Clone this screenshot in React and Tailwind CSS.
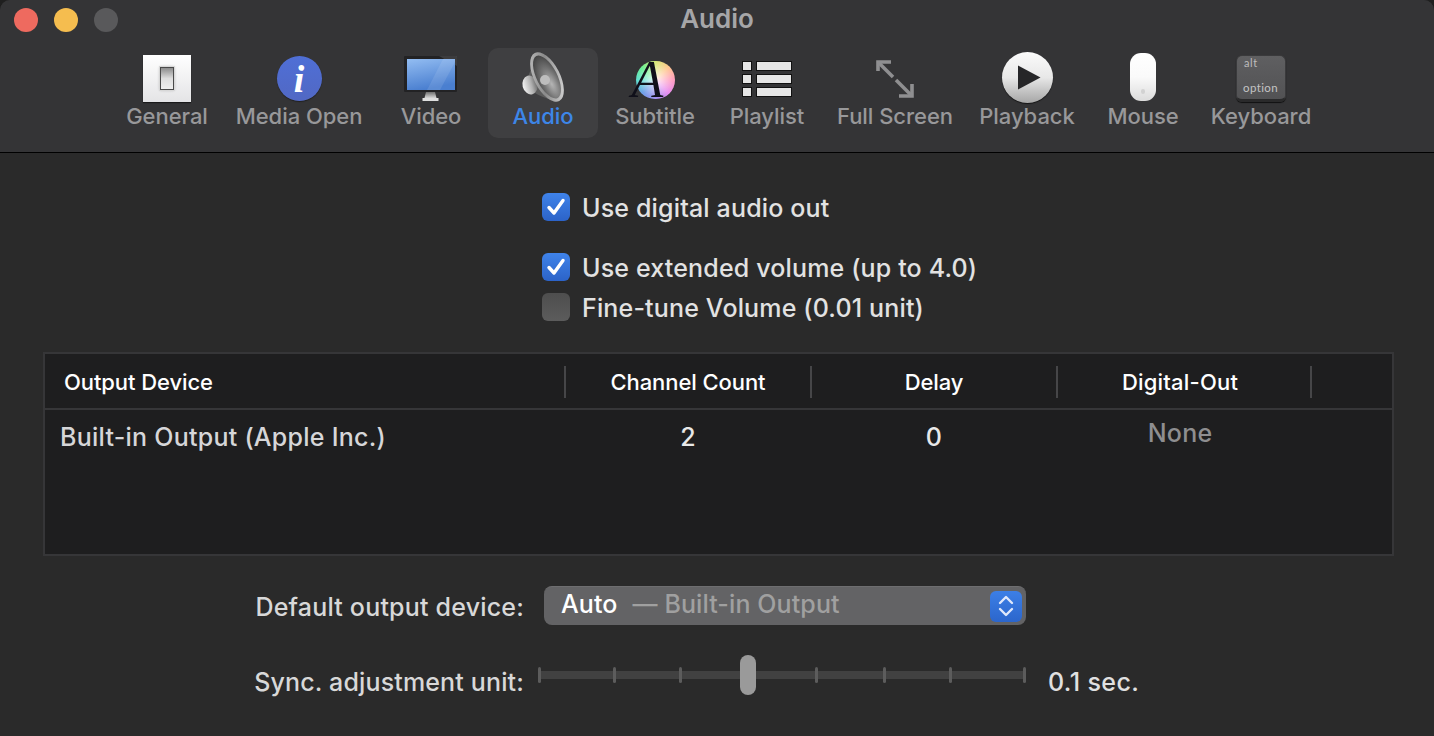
import React from "react";

const font = { fontFamily: "Inter, 'Liberation Sans', sans-serif" };

function SwitchIcon() {
  return (
    <div className="w-[48px] h-[47px] bg-gradient-to-b from-[#ffffff] to-[#e4e4e6] flex items-center justify-center shadow-[0_1px_1px_rgba(0,0,0,0.5)]">
      <div className="w-[14px] h-[23px] outline outline-1 outline-[#d8d8d8] border border-[#4a4a4a] bg-gradient-to-b from-[#8d8d8d] via-[#dedede] to-[#efefef] shadow-[0_0_3px_rgba(0,0,0,0.3)]" />
    </div>
  );
}

function InfoIcon() {
  return (
    <div className="w-[45px] h-[45px] mb-[1px] rounded-full bg-gradient-to-b from-[#4f6fd6] to-[#5168c4] flex items-center justify-center shadow-[0_1px_1px_rgba(0,0,0,0.4)]">
      <span className="text-white text-[38px] leading-none italic font-bold" style={{ fontFamily: "'Liberation Serif', serif" }}>i</span>
    </div>
  );
}

function MonitorIcon() {
  return (
    <svg width="56" height="46" viewBox="0 0 56 46">
      <defs>
        <linearGradient id="scr" x1="0" y1="0" x2="0.3" y2="1">
          <stop offset="0" stopColor="#93bdf2" />
          <stop offset="1" stopColor="#4a7fd0" />
        </linearGradient>
        <linearGradient id="std" x1="0" y1="0" x2="0" y2="1">
          <stop offset="0" stopColor="#6f6f6f" />
          <stop offset="1" stopColor="#d8d8d8" />
        </linearGradient>
      </defs>
      <rect x="1" y="0" width="53" height="36" rx="1" fill="#222224" />
      <path d="M36 0 H54 V10 Z" fill="#ffffff" opacity="0.12" />
      <rect x="4" y="3" width="48" height="31" fill="url(#scr)" />
      <path d="M24 34 L40 3 L52 3 L52 6 L37 34 Z" fill="#ffffff" opacity="0.1" />
      <path d="M23 36 H32 L33.5 42 H21.5 Z" fill="url(#std)" />
      <rect x="19.5" y="42" width="16" height="3" fill="#dedede" />
    </svg>
  );
}

function SpeakerIcon() {
  return (
    <svg width="48" height="58" viewBox="0 0 48 58" className="-mb-[2px]">
      <defs>
        <linearGradient id="rim" x1="0" y1="0" x2="1" y2="1">
          <stop offset="0" stopColor="#c9c9c9" />
          <stop offset="0.45" stopColor="#8a8a8a" />
          <stop offset="1" stopColor="#e6e6e6" />
        </linearGradient>
        <radialGradient id="cone" cx="0.55" cy="0.68" r="0.7">
          <stop offset="0" stopColor="#b5b5b5" />
          <stop offset="0.5" stopColor="#767676" />
          <stop offset="1" stopColor="#404040" />
        </radialGradient>
        <linearGradient id="mag" x1="0" y1="0" x2="1" y2="0">
          <stop offset="0" stopColor="#f4f4f4" />
          <stop offset="0.6" stopColor="#b0b0b0" />
          <stop offset="1" stopColor="#666" />
        </linearGradient>
      </defs>
      <path d="M15 12 C13 24 8 30 8 36 C9 44 18 50 36 55 Z" fill="#5c5c5c" />
      <ellipse cx="11" cy="39" rx="7.5" ry="9.5" transform="rotate(-15 11 39)" fill="url(#mag)" />
      <ellipse cx="28" cy="31" rx="13" ry="27" transform="rotate(-27 28 31)" fill="url(#rim)" />
      <ellipse cx="28" cy="31" rx="10.2" ry="23.5" transform="rotate(-27 28 31)" fill="url(#cone)" />
      <circle cx="26" cy="34" r="5" fill="#bdbdbd" />
    </svg>
  );
}

function SubtitleIcon() {
  return (
    <div className="relative w-[39px] h-[38px] mb-[3px] rounded-full bg-[conic-gradient(from_0deg,#d8e878,#ffc890,#ff9ec0,#e88ff0,#a090f0,#70a0e8,#60e0d0,#70f090,#d8e878)]">
      <div className="absolute inset-0 rounded-full bg-[radial-gradient(circle,rgba(255,255,255,0.85)_0%,rgba(255,255,255,0)_65%)]" />
      <span className="absolute left-[-4px] top-[-7px] text-[52px] leading-[52px] italic text-[#10101a]" style={{ fontFamily: "'Liberation Serif', serif" }}>A</span>
    </div>
  );
}

function PlaylistIcon() {
  const rows = [0, 1, 2];
  return (
    <div className="flex flex-col gap-[5px] mb-[6px]">
      {rows.map((r) => (
        <div key={r} className="flex gap-[6px]">
          <div className="w-[8px] h-[8px] bg-[#e6e6e6] outline outline-1 outline-[#111]" />
          <div className="w-[34px] h-[8px] bg-[#e6e6e6] outline outline-1 outline-[#111]" />
        </div>
      ))}
    </div>
  );
}

function FullScreenIcon() {
  return (
    <svg width="38" height="38" viewBox="0 0 38 38" fill="none" stroke="#8f8f91" strokeWidth="3.6" className="mb-[4px]">
      <path d="M2 11 V2 H15" />
      <path d="M2 2 L17 17" />
      <path d="M20 20 L36 36" />
      <path d="M36 24 V36 H23" />
    </svg>
  );
}

function PlaybackIcon() {
  return (
    <div className="w-[51px] h-[51px] -mb-[1px] rounded-full bg-gradient-to-b from-[#fbfbfb] via-[#e8e8e8] to-[#a6a6a6] flex items-center justify-center shadow-[0_1px_1px_rgba(0,0,0,0.6)]">
      <svg width="24" height="25" viewBox="0 0 24 25" className="ml-[4px]">
        <path d="M1 0.5 L23.5 12.5 L1 24.5 Z" fill="#262628" />
      </svg>
    </div>
  );
}

function MouseIcon() {
  return (
    <div className="w-[26px] h-[48px] mb-[1px] rounded-[11px] bg-gradient-to-b from-[#ffffff] via-[#fafafa] to-[#dcdcdc] flex items-end justify-center pb-[7px]">
      <div className="w-[4px] h-[5px] rounded-full bg-[#d2d2d2]" />
    </div>
  );
}

function KeyboardIcon() {
  return (
    <div className="w-[50px] h-[47px] rounded-[6px] border border-[#3a3a3c] border-b-[3px] border-b-[#2a2a2b] shadow-[0_1px_1px_rgba(0,0,0,0.7)] flex flex-col justify-between pl-[7px] pr-[2px] pt-[0px] pb-[5px] bg-gradient-to-b from-[#5f5f61] to-[#525254]" style={{ fontFamily: "Lato, sans-serif" }}>
      <span className="text-[11px] leading-[13px] text-[#bdbdbd] tracking-[0.6px]">alt</span>
      <span className="text-[11.5px] leading-[13px] text-[#c4c4c4] -ml-[1px] tracking-[0.4px]">option</span>
    </div>
  );
}

const tools = [
  ["General", 110, <SwitchIcon />],
  ["Media Open", 150, <InfoIcon />],
  ["Video", 110, <MonitorIcon />],
  ["Audio", 110, <SpeakerIcon />, true],
  ["Subtitle", 110, <SubtitleIcon />],
  ["Playlist", 110, <PlaylistIcon />],
  ["Full Screen", 142, <FullScreenIcon />],
  ["Playback", 118, <PlaybackIcon />],
  ["Mouse", 110, <MouseIcon />],
  ["Keyboard", 122, <KeyboardIcon />],
];

const toolWidths = {
  110: "w-[110px]",
  150: "w-[150px]",
  142: "w-[142px]",
  118: "w-[118px]",
  122: "w-[122px]",
};

function Tool({ label, width, icon, active }) {
  return (
    <div className={`flex flex-none flex-col items-center ${toolWidths[width]} h-[90px] rounded-[10px] ${active ? "bg-[#3f3f41]" : ""}`}>
      <div className="h-[54px] flex-none flex items-end justify-center">{icon}</div>
      <span className={`mt-[1px] text-[22px] leading-[26px] font-[450] tracking-[-0.05px] whitespace-nowrap ${active ? "text-[#3d86e8]" : "text-[#98989a]"}`}>{label}</span>
    </div>
  );
}

function Check({ on, label }) {
  return (
    <div className="flex items-center gap-[12px] h-[28px]">
      {on ? (
        <div className="w-[28px] h-[28px] rounded-[6px] bg-gradient-to-b from-[#3f83ea] to-[#2c63c8] flex items-center justify-center">
          <svg width="20" height="18" viewBox="0 0 20 18" fill="none" stroke="#fff" strokeWidth="3.4" strokeLinecap="round" strokeLinejoin="round">
            <path d="M3 9.5 L8 15 L17 2.5" />
          </svg>
        </div>
      ) : (
        <div className="w-[28px] h-[28px] rounded-[6px] bg-gradient-to-b from-[#4e4e4e] to-[#5c5c5c]" />
      )}
      <span className="mt-[2px] text-[25px] leading-[30px] font-[450] tracking-[0.16px] text-[#e2e2e2] whitespace-nowrap">{label}</span>
    </div>
  );
}

function HeaderCell({ w, left, children }) {
  return (
    <div className={`${w} flex-none h-[32px] border-r-2 border-[#464648] flex items-center text-[22px] font-medium tracking-[-0.08px] text-white whitespace-nowrap ${left ? "pl-[19px]" : "justify-center"}`}>
      {children}
    </div>
  );
}

function Tick() {
  return <div className="w-[3px] h-[16px] rounded-[1.5px] bg-[#5c5c5c]" />;
}

export default function App() {
  return (
    <div className="w-[1434px] h-[736px] bg-[#1f1f1f]">
      <div className="w-[1434px] h-[736px] overflow-hidden rounded-t-[10px] flex flex-col bg-[#2a2a2a]" style={font}>
        <header className="flex-none h-[153px] bg-[#343436] border-b border-black">
          <div className="h-[48px] flex items-center relative">
            <div className="absolute left-[14px] top-[8px] flex gap-[16px]">
              <div className="w-[24px] h-[24px] rounded-full bg-[#ee6a5f]" />
              <div className="w-[24px] h-[24px] rounded-full bg-[#f5bd4f]" />
              <div className="w-[24px] h-[24px] rounded-full bg-[#59595b]" />
            </div>
            <div className="w-full text-center text-[26px] leading-[36px] font-semibold text-[#a6a6a8] -mt-[11px]">Audio</div>
          </div>
          <div className="flex justify-center gap-[2px]">
            {tools.map(([label, width, icon, active]) => (
              <Tool key={label} label={label} width={width} icon={icon} active={active} />
            ))}
          </div>
        </header>

        <section className="flex flex-col pl-[542px] pt-[40px]">
          <Check on label="Use digital audio out" />
          <div className="mt-[32px]"><Check on label="Use extended volume (up to 4.0)" /></div>
          <div className="mt-[12px]"><Check label="Fine-tune Volume (0.01 unit)" /></div>
        </section>

        <section className="mt-[31px] ml-[43px] w-[1351px] h-[204px] flex-none border-2 border-[#363638] bg-[#1e1e1f]">
          <div className="h-[56px] border-b-2 border-[#363638] flex items-center pt-[2px]">
            <HeaderCell w="w-[521px]" left>Output Device</HeaderCell>
            <HeaderCell w="w-[246px]">Channel Count</HeaderCell>
            <HeaderCell w="w-[246px]">Delay</HeaderCell>
            <div className="w-[254px] flex-none h-[32px] border-r-2 border-[#464648] pr-[8px] flex items-center justify-center text-[22px] font-medium tracking-[0.2px] text-white whitespace-nowrap">Digital-Out</div>
          </div>
          <div className="flex pt-[12px] text-[25px] leading-[30px] font-[450] tracking-[0.25px] text-[#d6d6d8]">
            <div className="w-[520px] flex-none pl-[15px]">Built-in Output (Apple Inc.)</div>
            <div className="w-[246px] flex-none text-center text-[#e8e8e8]">2</div>
            <div className="w-[246px] flex-none text-center text-[#e8e8e8]">0</div>
            <div className="w-[246px] flex-none text-center text-[#8e8e90] -mt-[4px]">None</div>
          </div>
        </section>

        <section className="flex flex-col">
          <div className="mt-[30px] flex items-center h-[39px]">
            <div className="mt-[3px] w-[524px] flex-none text-right text-[25px] leading-[42px] font-[450] tracking-[0.2px] text-[#d8d8d8]">Default output device:</div>
            <div className="ml-[20px] w-[482px] h-[39px] rounded-[8px] bg-[#636365] border-t border-[#6e6e70] flex items-center pl-[17px] pr-[4px] text-[25px] font-[450] tracking-[0.1px]">
              <span className="text-white -mt-[2px]">Auto</span>
              <span className="ml-[15px] -mt-[2px] text-[#a0a0a0]">— Built-in Output</span>
              <div className="ml-auto w-[32px] h-[31px] rounded-[6px] bg-gradient-to-b from-[#3c7fe6] to-[#2c66cc] flex items-center justify-center">
                <svg width="18" height="26" viewBox="0 0 18 26" fill="none" stroke="#dfe8fb" strokeWidth="2.4" strokeLinecap="round" strokeLinejoin="round">
                  <path d="M3 10 L9 4 L15 10" />
                  <path d="M3 16 L9 22 L15 16" />
                </svg>
              </div>
            </div>
          </div>
          <div className="mt-[30px] flex items-start h-[40px]">
            <div className="mt-[12px] w-[524px] flex-none text-right text-[25px] leading-[30px] font-[450] tracking-[0.15px] text-[#d8d8d8]">Sync. adjustment unit:</div>
            <div className="ml-[14px] w-[488px] h-[40px] relative flex items-center">
              <div className="absolute left-0 right-0 top-[16px] h-[8px] bg-[#414141]" />
              <div className="relative w-full flex items-center">
                <div className="flex-none w-[75px]"><Tick /></div>
                <div className="flex-none w-[66px]"><Tick /></div>
                <div className="flex-none w-[136px]"><Tick /></div>
                <div className="flex-none w-[68px]"><Tick /></div>
                <div className="flex-none w-[66px]"><Tick /></div>
                <div className="flex-none w-[74px]"><Tick /></div>
                <Tick />
              </div>
              <div className="absolute left-[202px] top-0 w-[16px] h-[40px] rounded-[8px] bg-[#9a9a9a]" />
            </div>
            <div className="mt-[12px] ml-[22px] text-[25px] leading-[30px] font-[450] tracking-[0.4px] text-[#e0e0e0] whitespace-nowrap">0.1 sec.</div>
          </div>
        </section>
      </div>
    </div>
  );
}
